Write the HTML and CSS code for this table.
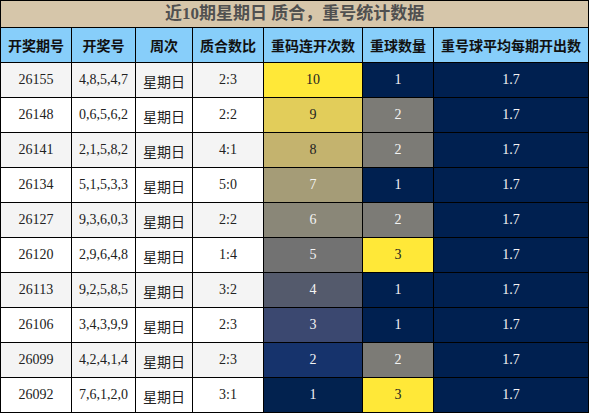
FILE: index.html
```html
<!DOCTYPE html>
<html lang="zh-CN">
<head>
  <meta charset="UTF-8">
  <title>近10期星期日 质合，重号统计数据</title>
  <link rel="stylesheet" href="styles.css">
</head>
<body>
  <table class="stats">
    <colgroup>
      <col class="c-issue">
      <col class="c-nums">
      <col class="c-week">
      <col class="c-ratio">
      <col class="c-streak">
      <col class="c-repeat">
      <col class="c-avg">
    </colgroup>
    <thead>
      <tr class="title-row">
        <th colspan="7">近10期星期日 质合，重号统计数据</th>
      </tr>
      <tr class="head-row">
        <th>开奖期号</th>
        <th>开奖号</th>
        <th>周次</th>
        <th>质合数比</th>
        <th>重码连开次数</th>
        <th>重球数量</th>
        <th>重号球平均每期开出数</th>
      </tr>
    </thead>
    <tbody>
      <tr>
        <td>26155</td><td>4,8,5,4,7</td><td class="week">星期日</td><td>2:3</td>
        <td class="s10">10</td><td class="r1">1</td><td class="avg">1.7</td>
      </tr>
      <tr>
        <td>26148</td><td>0,6,5,6,2</td><td class="week">星期日</td><td>2:2</td>
        <td class="s9">9</td><td class="r2">2</td><td class="avg">1.7</td>
      </tr>
      <tr>
        <td>26141</td><td>2,1,5,8,2</td><td class="week">星期日</td><td>4:1</td>
        <td class="s8">8</td><td class="r2">2</td><td class="avg">1.7</td>
      </tr>
      <tr>
        <td>26134</td><td>5,1,5,3,3</td><td class="week">星期日</td><td>5:0</td>
        <td class="s7">7</td><td class="r1">1</td><td class="avg">1.7</td>
      </tr>
      <tr>
        <td>26127</td><td>9,3,6,0,3</td><td class="week">星期日</td><td>2:2</td>
        <td class="s6">6</td><td class="r2">2</td><td class="avg">1.7</td>
      </tr>
      <tr>
        <td>26120</td><td>2,9,6,4,8</td><td class="week">星期日</td><td>1:4</td>
        <td class="s5">5</td><td class="r3">3</td><td class="avg">1.7</td>
      </tr>
      <tr>
        <td>26113</td><td>9,2,5,8,5</td><td class="week">星期日</td><td>3:2</td>
        <td class="s4">4</td><td class="r1">1</td><td class="avg">1.7</td>
      </tr>
      <tr>
        <td>26106</td><td>3,4,3,9,9</td><td class="week">星期日</td><td>2:3</td>
        <td class="s3">3</td><td class="r1">1</td><td class="avg">1.7</td>
      </tr>
      <tr>
        <td>26099</td><td>4,2,4,1,4</td><td class="week">星期日</td><td>2:3</td>
        <td class="s2">2</td><td class="r2">2</td><td class="avg">1.7</td>
      </tr>
      <tr>
        <td>26092</td><td>7,6,1,2,0</td><td class="week">星期日</td><td>3:1</td>
        <td class="s1">1</td><td class="r3">3</td><td class="avg">1.7</td>
      </tr>
    </tbody>
  </table>
</body>
</html>
```

FILE: styles.css
```css
body {
  margin: 0;
  background-color: #fff;
  font-family: 'Liberation Serif', 'Noto Sans CJK SC', serif;
  color: #222;
}

.stats {
  width: 588px;
  table-layout: fixed;
  border-collapse: collapse;
  border: 1px solid #000;
}

.c-issue { width: 71px; }
.c-nums { width: 64px; }
.c-week { width: 57px; }
.c-ratio { width: 71px; }
.c-streak { width: 99px; }
.c-repeat { width: 71px; }
.c-avg { width: 155px; }

.stats th,
.stats td {
  border: 1px solid #000;
  padding: 0;
  text-align: center;
  white-space: nowrap;
  line-height: 20px;
}

.title-row th {
  height: 26px;
  background-color: #d6c6aa;
  color: #505050;
  font-family: 'Liberation Serif', 'Noto Sans CJK SC', serif;
  font-size: 17px;
  font-weight: bold;
}

.head-row th {
  height: 34px;
  background-color: #87cefa;
  color: #111;
  font-family: 'Noto Sans CJK SC', sans-serif;
  font-size: 14px;
  font-weight: bold;
}

.stats td {
  height: 34px;
  font-size: 14px;
}

.stats tbody tr:nth-child(odd) td {
  background-color: #f4f4f4;
}

.stats tbody tr:nth-child(even) td {
  background-color: #fff;
}

.stats td.week {
  height: 33px;
  padding-top: 1px;
  font-family: 'Noto Sans CJK SC', sans-serif;
  font-size: 14px;
}

/* 重码连开次数 gradient */
.stats tbody tr td.s10 { background-color: #ffe838; color: #222; }
.stats tbody tr td.s9 { background-color: #e2cd5a; color: #222; }
.stats tbody tr td.s8 { background-color: #c4b36e; color: #222; }
.stats tbody tr td.s7 { background-color: #a59c77; color: #f4f4f4; }
.stats tbody tr td.s6 { background-color: #8a8778; color: #f4f4f4; }
.stats tbody tr td.s5 { background-color: #727272; color: #f4f4f4; }
.stats tbody tr td.s4 { background-color: #545a6c; color: #f4f4f4; }
.stats tbody tr td.s3 { background-color: #3b4870; color: #f4f4f4; }
.stats tbody tr td.s2 { background-color: #16336c; color: #f4f4f4; }
.stats tbody tr td.s1 { background-color: #02224f; color: #f4f4f4; }

/* 重球数量 */
.stats tbody tr td.r1 { background-color: #002050; color: #f4f4f4; }
.stats tbody tr td.r2 { background-color: #7c7b76; color: #f4f4f4; }
.stats tbody tr td.r3 { background-color: #ffe838; color: #222; }

.stats tbody tr td.avg {
  background-color: #002050;
  color: #f4f4f4;
}
```
